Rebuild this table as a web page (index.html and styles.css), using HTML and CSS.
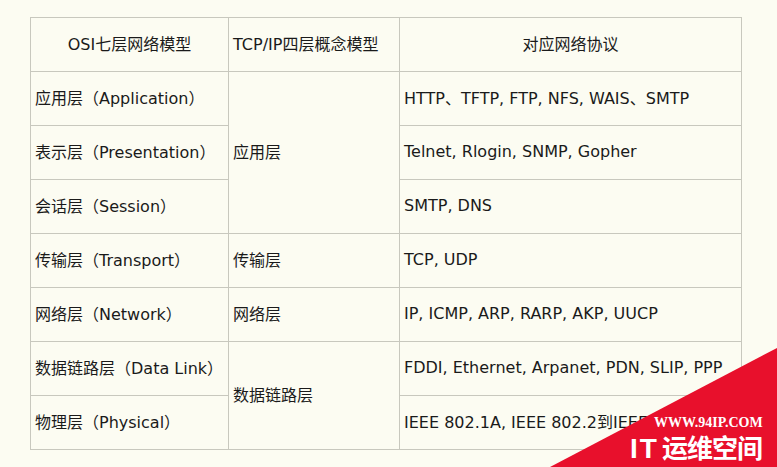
FILE: index.html
```html
<!DOCTYPE html>
<html lang="zh-CN">
<head>
<meta charset="utf-8">
<link rel="stylesheet" href="styles.css">
</head>
<body>
<div class="page">
<table class="osi">
  <colgroup>
    <col class="c1"><col class="c2"><col class="c3">
  </colgroup>
  <tr>
    <td class="center">OSI七层网络模型</td>
    <td>TCP/IP四层概念模型</td>
    <td class="center">对应网络协议</td>
  </tr>
  <tr>
    <td>应用层（Application）</td>
    <td rowspan="3">应用层</td>
    <td>HTTP、TFTP, FTP, NFS, WAIS、SMTP</td>
  </tr>
  <tr>
    <td>表示层（Presentation）</td>
    <td>Telnet, Rlogin, SNMP, Gopher</td>
  </tr>
  <tr>
    <td>会话层（Session）</td>
    <td>SMTP, DNS</td>
  </tr>
  <tr>
    <td>传输层（Transport）</td>
    <td>传输层</td>
    <td>TCP, UDP</td>
  </tr>
  <tr>
    <td>网络层（Network）</td>
    <td>网络层</td>
    <td>IP, ICMP, ARP, RARP, AKP, UUCP</td>
  </tr>
  <tr>
    <td>数据链路层（Data Link）</td>
    <td rowspan="2">数据链路层</td>
    <td>FDDI, Ethernet, Arpanet, PDN, SLIP, PPP</td>
  </tr>
  <tr>
    <td>物理层（Physical）</td>
    <td>IEEE 802.1A, IEEE 802.2到IEEE 802.11</td>
  </tr>
</table>
</div>
<div class="mark">
  <div class="mark-url">WWW.94IP.COM</div>
  <div class="mark-name"><span class="mark-i">I</span><span class="mark-t">T</span>运维空间</div>
</div>
</body>
</html>
```
FILE: styles.css
```css
html, body {
  margin: 0;
  padding: 0;
}
body {
  background: #fcfcf2;
  width: 777px;
  height: 467px;
  overflow: hidden;
  position: relative;
  font-family: "DejaVu Sans", "Noto Sans CJK SC", sans-serif;
  font-size: 16px;
  color: #1a1a1a;
}
.page {
  padding: 17px 0 0 30px;
}
.osi {
  border-collapse: collapse;
  table-layout: fixed;
  width: 711px;
}
.c1 { width: 198px; }
.c2 { width: 171px; }
.c3 { width: 342px; }
.osi td {
  border: 1px solid #c8c8be;
  height: 54px;
  padding: 0 0 3px 4px;
  box-sizing: border-box;
  vertical-align: middle;
  white-space: nowrap;
  overflow: hidden;
}
.osi td.center {
  text-align: center;
  padding: 0 0 3px 0;
}
.mark {
  position: absolute;
  right: 0;
  bottom: 0;
  width: 227px;
  height: 119px;
  background: #e8102c;
  clip-path: polygon(0 100%, 100% 0, 100% 100%);
  color: #fff;
}
.mark-url {
  position: absolute;
  left: 104px;
  top: 67px;
  font-family: "Liberation Serif", serif;
  font-weight: bold;
  font-size: 14px;
  white-space: nowrap;
}
.mark-name {
  position: absolute;
  left: 80px;
  top: 84px;
  font-family: "Noto Sans CJK SC", sans-serif;
  font-weight: bold;
  font-size: 26px;
  line-height: 30px;
  letter-spacing: -1px;
  white-space: nowrap;
}
.mark-i,
.mark-t {
  font-family: "Liberation Sans", sans-serif;
  font-size: 28px;
}
.mark-i {
  letter-spacing: 2px;
}
.mark-t {
  letter-spacing: 5px;
}
```
